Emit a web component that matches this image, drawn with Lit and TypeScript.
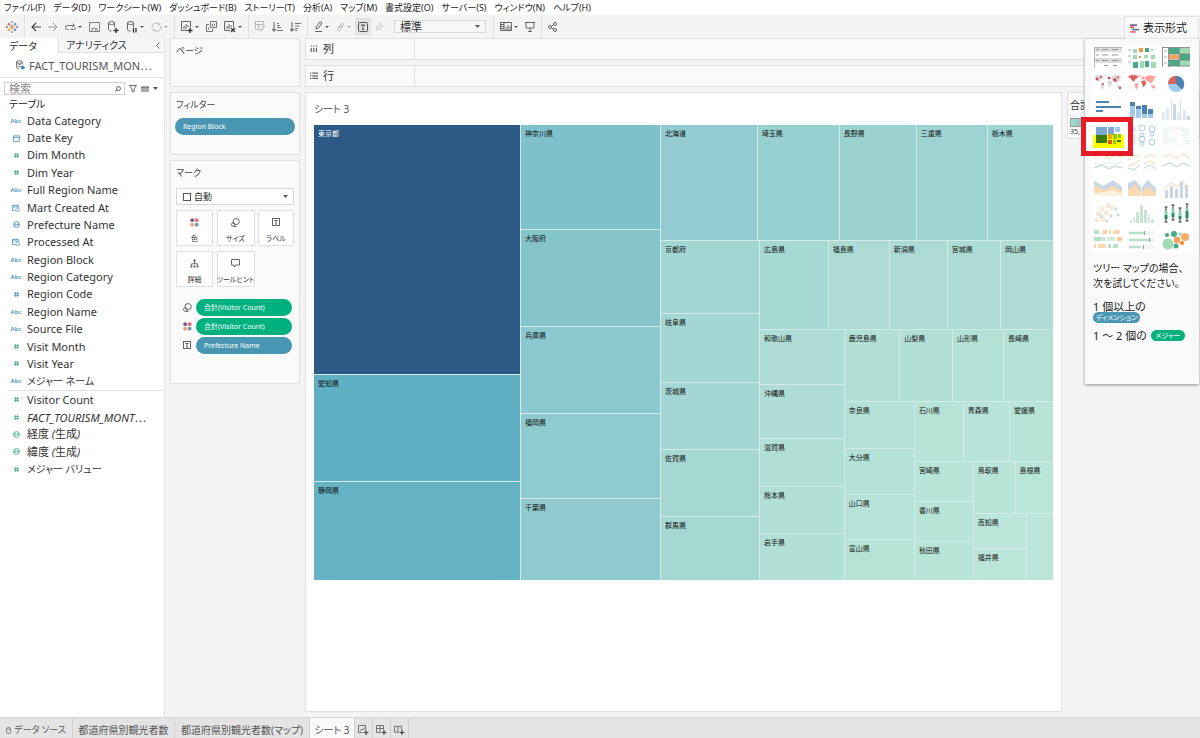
import { LitElement, html, svg, css, TemplateResult } from "lit";
import { customElement, property } from "lit/decorators.js";
import { classMap } from "lit/directives/class-map.js";

/* ---------- icons ---------- */

const G = "#666";
const icon = (w: number, h: number, body: unknown, stroke = G) => html`<svg
  class="icon" width=${w} height=${h} viewBox="0 0 ${w} ${h}" fill="none"
  stroke=${stroke} stroke-width="1" aria-hidden="true">${body}</svg>`;

const plus = svg`<path d="M6.5 9.5h5M9 7v5" stroke="#333" stroke-width="1.4"/>`;
const caret = () => html`<svg class="caret" width="5" height="3" viewBox="0 0 5 3" aria-hidden="true"><path d="M0 0h5L2.5 3z" fill="#555" /></svg>`;
const smallCaret = (c: string) => html`<svg class="caret" width="4" height="2" viewBox="0 0 4 2" aria-hidden="true"><path d="M0 0h4L2 2z" fill=${c} /></svg>`;

const icons: Record<string, TemplateResult> = {
  logo: icon(12, 12, svg`
    <path d="M6 3.8v4.4M3.8 6h4.4" stroke="#e8762d" stroke-width="1.2"/>
    <path d="M3 1.8v2.8M1.6 3.2h2.8" stroke="#c9485b"/><path d="M9 1.8v2.8M7.6 3.2h2.8" stroke="#5b879b"/>
    <path d="M3 7.4v2.8M1.6 8.8h2.8" stroke="#eb912c"/><path d="M9 7.4v2.8M7.6 8.8h2.8" stroke="#59879b"/>
    <path d="M6 0v2M5 1h2M6 10v2M5 11h2" stroke="#7099a6" stroke-width=".8"/>
    <path d="M1 5v2M0 6h2M11 5v2M10 6h2" stroke="#5c6692" stroke-width=".8"/>`),
  back: icon(10, 10, svg`<path d="M10 5H1M5 1L1 5l4 4" stroke-width="1.1"/>`, "#444"),
  forward: icon(10, 10, svg`<path d="M0 5h9M5 1l4 4-4 4"/>`, "#999"),
  replay: icon(11, 8, svg`<path d="M3.500 6.500H2.500a2 2 0 010-4H9.500M7.500 .5l2 2-2 2M5.500 6.500h3a2 2 0 002-2"/>`, "#777"),
  save: icon(11, 10, svg`<path d="M.5.500h10v9H.500zM3 9.500v-3h5v3M6.500 7.500v1.500" stroke-width=".8"/>`),
  dbAdd: icon(12, 12, svg`<ellipse cx="4.500" cy="2" rx="3" ry="1.500"/><path d="M1.500 2v6.500c0 1 1.500 1.500 3 1.500M7.500 2v4"/>${plus}`),
  dbPause: icon(12, 12, svg`<ellipse cx="4.500" cy="2" rx="3" ry="1.500"/><path d="M1.500 2v6.500c0 1 1 1.500 3 1.500M7.500 2v4"/><path d="M7.500 7v4.500M10 7v4.500" stroke="#333" stroke-width="1.300"/>`),
  refresh: icon(11, 10, svg`<path d="M1 6a4.300 4.300 0 017.500-3.500M10 4a4.300 4.300 0 01-7.500 3.700M8.800.8v2H6.800M2 9.300v-2h2"/>`, "#bbb"),
  sheetAdd: icon(12, 12, svg`<path d="M.500.500h9v6M.500.500v9h6M3 8V5M5 8V3M7 6V4"/>${plus}`),
  duplicate: icon(11, 11, svg`<path d="M4.500.500h6v6h-6zM3 3.500H.500v7h6V8M6.500 5V3M8.500 5V2.500M2.500 8.500v-2"/>`, "#777"),
  sheetClear: icon(12, 12, svg`<path d="M.500.500h9v6M.500.500v9h6M3 8V5M5 8V3M7 6V4"/><path d="M7 7l4 4M11 7l-4 4" stroke="#333" stroke-width="1.200"/>`),
  swap: icon(10, 11, svg`<path d="M.500.500h8v3h-8zM.500.500v8h3v-5M5 9c3 0 4-1 4-4M7.500 6L9 4.500 10 6M6 7.500L4.500 9 6 10.500" stroke-width=".8"/>`, "#aaa"),
  asc: icon(11, 10, svg`<path d="M2 0v9M.200 7L2 9l1.800-2M5 1.500h2M5 3.500h3M5 5.500h4M5 8.500h6" stroke-width="1.200"/>`, "#777"),
  desc: icon(11, 10, svg`<path d="M2 0v9M.200 7L2 9l1.800-2M5 1.500h6M5 4h4.500M5 6.500h3M5 8.500h2" stroke-width="1.200"/>`, "#777"),
  pen: icon(9, 11, svg`<path d="M2 8l.5-2.500L6 .800 8 2 4.500 7zM1 10.500h7"/>`),
  clip: icon(9, 10, svg`<path d="M2 6l3.500-4.500c1-1 3 0 2 1.500L4 8c-1 1.300-3.500.200-2-1.800l3-3.500M4 6.500l2-3"/>`, "#bbb"),
  label: icon(10, 10, svg`<rect x=".500" y=".500" width="9" height="9" rx="1"/><path d="M3 3.500V3h4v.500M5 3v4.500M4 7.500h2"/>`, "#555"),
  pin: icon(9, 9, svg`<path d="M5 .700l3 3-1.500.300L5 6l-.300 1.700L1.500 4.500 3.500 4 5 2.200zM3 6L.500 8.500" stroke-width=".8"/>`, "#bbb"),
  cards: icon(12, 10, svg`<path d="M.500.500h11v8H.500zM4 .500v8" /><path d="M1 2.500h3M1 4.500h3M1 6.500h3M6 8V5M8 8V3M10 8V4"/>`),
  present: icon(10, 10, svg`<path d="M0 .500h10M1 .500v5.500h8V.500M5 6v3M3 9.500h4"/>`),
  share: icon(9, 10, svg`<circle cx="2" cy="5" r="1.500"/><circle cx="7" cy="2" r="1.500"/><circle cx="7" cy="8" r="1.500"/><path d="M3.300 4.300l2.400-1.500M3.300 5.700l2.400 1.500"/>`),
  chevron: icon(4, 7, svg`<path d="M3.500.500l-3 3 3 3"/>`),
  source: icon(9, 10, svg`<ellipse cx="3.500" cy="2" rx="2.800" ry="1.300"/><path d="M.700 2v5.500c0 .800 1 1.300 2.500 1.300M6.300 2v2.500M2.500 4.500h2M2.500 6.500h2"/><circle cx="6.700" cy="7.500" r="2" fill="#4a8fb5" stroke="none"/>`),
  search: icon(6, 6, svg`<circle cx="3.500" cy="2.500" r="2"/><path d="M2 4L.300 5.700"/>`),
  funnel: icon(8, 8, svg`<path d="M.500.500h7L5 4v3L3 6V4z"/>`),
  list: icon(8, 6, svg`<path d="M1 0v6M3 0v6M5 0v6M7 0v6" stroke-width="1.100"/><path d="M0 1.500h8" stroke-width=".6"/>`),
  columns: icon(8, 8, svg`<path d="M1.200 3v4M3.800 3v4M6.400 3v4M1.200.500v1.200M3.800.500v1.200M6.400.500v1.200" stroke-width="1.200"/>`),
  rows: icon(8, 8, svg`<path d="M0 1.200h1.300M0 3.800h1.300M0 6.400h1.300M2.200 1.200H8M2.200 3.800H8M2.200 6.400H8" stroke-width="1.200"/>`),
  color: icon(9, 9, svg`<g stroke="none"><circle cx="2.200" cy="2.200" r="1.900" fill="#7b5a87"/><circle cx="6.700" cy="2.200" r="1.900" fill="#ee6677"/><circle cx="2.200" cy="6.700" r="1.900" fill="#f0a070"/><circle cx="6.700" cy="6.700" r="1.900" fill="#6b98a8"/></g>`),
  size: icon(9, 9, svg`<circle cx="5.200" cy="3.600" r="3.100"/><circle cx="2.300" cy="6.500" r="1.800"/><path d="M3 8.500h2.500"/>`),
  tag: icon(8, 9, svg`<rect x=".500" y=".500" width="7" height="7"/><path d="M2.300 2.500h3.400M4 2.500v3.500M3 6h2"/>`, "#666"),
  detail: icon(9, 9, svg`<path d="M4.500 2v3M1.500 6.500V4.800h6v1.700"/><g fill="#555" stroke="none"><rect x="3.500" y=".5" width="2" height="2"/><rect x=".500" y="6.500" width="1.800" height="2"/><rect x="3.600" y="6.500" width="1.800" height="2"/><rect x="6.700" y="6.500" width="1.800" height="2"/></g>`),
  tooltip: icon(9, 9, svg`<path d="M.500.500h8v5.500H5L3 8V6H.500z"/>`),
  square: icon(8, 8, svg`<rect x=".500" y=".500" width="7" height="7"/>`, "#555"),
  cylinder: icon(5, 7, svg`<rect x=".500" y=".500" width="4" height="6" rx="1.500"/><path d="M.500 2.200h4"/>`, "#888"),
  newSheet: icon(11, 10, svg`<path d="M.500.500h7v4M.500.500v7h4M2 6l2-2 1 1 2-2.500" stroke-width=".9"/><path d="M5.500 7.500h5M8 5v5" stroke="#444" stroke-width="1.200"/>`),
  newDash: icon(11, 10, svg`<path d="M.500.500h7v4M.500.500v7h4M.500 3.500h7M4 .500v7" stroke-width=".9"/><path d="M5.500 7.500h5M8 5v5" stroke="#444" stroke-width="1.200"/>`),
  newStory: icon(11, 10, svg`<path d="M.500 1l3.500.500L7.500 1v4M.500 1v6l3.500.500M4 1.500v6" stroke-width=".9"/><path d="M5.500 7.500h5M8 5v5" stroke="#444" stroke-width="1.200"/>`),
  showMe: icon(10, 9, svg`<path d="M0 1.200h7" stroke="#7b5a87" stroke-width="1.800"/><path d="M0 3.400h4" stroke="#e15759" stroke-width="1.800"/><path d="M2 5.600h7" stroke="#4e79a7" stroke-width="1.600"/><path d="M0 7.900h6" stroke="#f0787a" stroke-width="1.800"/>`),
};

const blue = "#5f9fbe";
const green = "#55b995";
const typeIcon = (kind: string, tone: string) => {
  const c = tone === "dim" ? blue : green;
  switch (kind) {
    case "abc":
      return html`<span class="abc">Abc</span>`;
    case "num":
      return icon(7, 7, svg`<path d="M2.500 1v5M4.500 1v5M1 2.500h5M1 4.500h5" stroke-width=".9"/>`, c);
    case "geo":
      return icon(7, 7, svg`<circle cx="3.500" cy="3.500" r="2.900"/><path d="M.500 3.500h6M2 1.300v4.400M5 1.300v4.400" stroke-width=".7"/>`, c);
    case "date":
      return icon(7, 7, svg`<path d="M.500 1h6v5.500h-6zM.500 2.700h6M2 0v1M5 0v1" stroke-width=".9"/>`, c);
    default:
      return icon(8, 8, svg`<path d="M3.500 6.500h-3v-5h6V3.500M.500 3h6M2 .500v1M5 .500v1" stroke-width=".9"/><circle cx="5.700" cy="5.700" r="1.800" stroke-width=".8"/>`, c);
  }
};

/* ---------- chart thumbnails ---------- */

type Box = [number, number, number, number, string];
const boxes = (list: Box[]) => list.map(([x, y, w, h, c]) => svg`<rect x=${x} y=${y} width=${w} height=${h} fill=${c}/>`);
const line = (d: string, c: string, w = 1) => svg`<path d=${d} fill="none" stroke=${c} stroke-width=${w}/>`;
const rings = (pts: number[][], c: string, r = 2) => pts.map(([x, y, q]) => svg`<circle cx=${x} cy=${y} r=${q ?? r} fill="none" stroke=${c} stroke-width=".9"/>`);
const world = "M0 2l3-2 6 .500 1 2-3 2-1 2-2-1-1-2zM7 8l3 .500v3L8.500 15 7 12zM10 0h3l-1 2zM13 3l3-2 1 2-2 2zM13 6l4-.500 1 3-2.500 4-1.500-4zM17 2l4-2 7 1.500-2 2-1 3-3 2-1-2-3-1zM22.500 11l3-1 2 2-2 2z";

const thumbs: { name: string; art: unknown }[] = [
  { name: "テキスト表", art: svg`${boxes([[0, 0, 28, 5, "#dcdcdc"], [0, 11, 28, 5, "#dcdcdc"]])}
      ${line("M.500 0v21M0 .500h28", "#aaa", .8)}
      ${line("M2 2.500h3M2 8h3M2 13.500h3M8 2.500h6M18 2.500h6M8 8h6M18 8h6M8 13.500h6M18 13.500h6M10 18.500h4M19 18.500h4", "#999", 1)}` },
  { name: "ヒート マップ", art: svg`${boxes([[5, 2, 4, 4, "#a1dbb5"], [11, 1, 4, 4, "#f59b3c"], [17, 1, 4, 4, "#4aa986"], [23, 2, 2, 2, "#a1dbb5"], [5, 8, 4, 4, "#a1dbb5"], [11, 9, 2, 2, "#f59b3c"], [16, 8, 4, 3, "#a1dbb5"], [23, 8, 4, 4, "#a1dbb5"], [5, 15, 5, 6, "#4aa986"], [12, 14, 4, 7, "#a1dbb5"], [17, 14, 4, 6, "#4aa986"], [23, 15, 5, 6, "#a1dbb5"]])}${line("M0 3h3M0 9h3M0 15h3", "#aaa")}` },
  { name: "ハイライト表", art: svg`${boxes([[7, 1, 10, 6, "#4aa986"], [18, 1, 10, 6, "#a1dbb5"], [7, 8, 10, 4, "#f5a35c"], [18, 7, 10, 6, "#4aa986"], [7, 13, 10, 6, "#4aa986"], [18, 13, 10, 6, "#a1dbb5"]])}${line("M.500 0v20M0 .500h28M6.500 0v20M17.500 0v20M6 7h22M6 13h22M6 19h22", "#777", .8)}${line("M2 4h3M2 10h3M2 16h3", "#aaa")}` },
  { name: "シンボル マップ", art: svg`<path d=${world} fill="#d8d8d8" transform="translate(0 2)"/><g fill="#d14b58"><circle cx="3" cy="6" r="1.500"/><circle cx="7" cy="4" r="1"/><circle cx="15" cy="5" r="1.300"/><circle cx="21" cy="7" r="1.800"/><circle cx="24" cy="4" r="1"/><circle cx="26" cy="15" r="1.200"/><circle cx="9" cy="11" r="1"/></g>` },
  { name: "マップ", art: svg`<g transform="translate(0 2)"><path d=${world} fill="#ffa09a"/><path d="M0 2l3-2 6 .500 1 2-3 2-1 2-2-1-1-2z" fill="#dc605c"/><path d="M13 6l4-.500 1 3-2.500 4-1.500-4z" fill="#dc605c"/></g>` },
  { name: "円グラフ", art: svg`<circle cx="14" cy="11" r="8" fill="#a3cbee"/><path d="M14 11V3a8 8 0 016 13.500z" fill="#4e82ae"/><path d="M14 11V3a8 8 0 00-8 8z" fill="#dc605c"/>` },
  { name: "横棒グラフ", art: svg`${boxes([[2, 2, 13, 2, "#4e82ae"], [2, 7, 25, 2, "#4e82ae"], [2, 11, 7, 2, "#4e82ae"]])}` },
  { name: "積み上げ棒グラフ", art: svg`${boxes([[2, 3, 5, 16, "#a3cbee"], [2, 3, 5, 4, "#4e82ae"], [8, 7, 5, 12, "#a3cbee"], [8, 7, 5, 3, "#4e82ae"], [14, 6, 5, 13, "#4e82ae"], [14, 15, 5, 4, "#a3cbee"], [20, 10, 5, 9, "#a3cbee"], [20, 10, 5, 5, "#4e82ae"]])}` },
  { name: "並列棒グラフ", art: svg`${line("M9.500 0v21M18.500 0v21", "#e0e0e0")}${boxes([[0, 13, 3, 8, "#dbeaf6"], [4, 9, 3, 12, "#dbeaf6"], [11, 5, 3, 16, "#c7d6e3"], [15, 14, 3, 7, "#dbeaf6"], [21, 11, 3, 10, "#dbeaf6"], [25, 17, 3, 4, "#c7d6e3"]])}` },
  { name: "ツリーマップ", art: svg`${boxes([[-1, 10, 31, 13, "#ffff00"], [2, 2, 11, 8, "#7ba7d0"], [14, 2, 6, 8, "#7ba7d0"], [21, 2, 5, 5, "#a3cbee"], [2, 10, 11, 8, "#3f7a00"], [14, 9, 4, 5, "#f5a700"], [14, 15, 4, 4, "#e15a00"], [19, 9, 4, 5, "#97c800"], [24, 9, 3, 4, "#97c800"], [19, 15, 3, 4, "#97c800"], [23, 15, 4, 2, "#3f7a00"]])}` },
  { name: "円ビュー", art: svg`${rings([[5, 4], [14, 3, 3], [24, 4, 3], [14, 10], [24, 9], [5, 12], [14, 14, 3], [5, 17, 2], [14, 19], [24, 17, 3]], "#9cc4e4")}` },
  { name: "並列円", art: svg`${rings([[3, 5], [9, 4], [20, 4], [25, 6], [4, 11], [22, 11], [3, 17], [9, 16], [25, 17]], "#dce8f1")}${line("M14 0v21", "#eee")}` },
  { name: "線 (連続)", art: svg`${line("M0 7l8-4 7 5 6-5 7 4", "#fbd3a6")}${line("M0 12l8 2 7-3 6 3 7-4", "#e6e6e6")}${line("M0 17l8-3 7 4 6-3 7 2", "#b7cede")}` },
  { name: "線 (不連続)", art: svg`${line("M0 9l6-5 6 2M16 7l6-4 6 4", "#fbd3a6")}${line("M0 15l6-2 6-4M16 13l6-3 6 3", "#fbd3a6")}${line("M0 17l6 2 6-5M16 17l6-3 6 4", "#b7cede")}` },
  { name: "二重線", art: svg`${line("M0 7l8-4 7 5 6-5 7 4", "#fbd3a6")}${line("M0 15l8-3 7 4 6-4 7 3", "#b7cede")}` },
  { name: "面グラフ (連続)", art: svg`<path d="M0 4l9 5 10-6 9 7v9H0z" fill="#c9d7e4"/><path d="M0 8l10 5 9-4 9 5v5H0z" fill="#fbd9b3"/><path d="M0 16l10-1 9-2 9 4v2H0z" fill="#fef0e0"/>` },
  { name: "面グラフ (不連続)", art: svg`<path d="M0 6l7-3 6 7v9H0zM14 10l6-7 8 8v8H14z" fill="#c9d7e4"/><path d="M0 13l7-6 6 8v4H0zM14 14l6-4 8 6v3H14z" fill="#fbd9b3"/>` },
  { name: "二重組み合わせ", art: svg`${boxes([[3, 13, 3, 8, "#c9d7e4"], [8, 9, 3, 12, "#c9d7e4"], [13, 12, 3, 9, "#c9d7e4"], [18, 5, 3, 16, "#c9d7e4"], [23, 8, 3, 13, "#c9d7e4"]])}${line("M2 12l7-6 6 4 5-6 6 6", "#fbd3a6")}` },
  { name: "散布図", art: svg`${rings([[8, 6], [14, 3], [4, 11], [12, 10], [18, 5], [3, 17], [9, 16]], "#fcd0a5", 1.6)}${line("M22 4v4M20 6h4M24 10v4M22 12h4M17 11v4M15 13h4M13 16v4M11 18h4M7 11v4M5 13h4", "#b5dfca")}` },
  { name: "ヒストグラム", art: svg`${boxes([[2, 17, 2, 3, "#d5eadc"], [5, 14, 2, 6, "#d5eadc"], [8, 9, 3, 11, "#c9e3d3"], [12, 2, 3, 18, "#c9e3d3"], [16, 7, 3, 13, "#c9e3d3"], [20, 11, 2, 9, "#d5eadc"], [23, 16, 3, 4, "#d5eadc"]])}` },
  { name: "箱ヒゲ図", art: svg`${line("M4 4v15M11 2v15M18 5v14M25 1v17M2.500 4h3M2.500 19h3M9.500 2h3M9.500 17h3M16.500 5h3M16.500 19h3M23.500 1h3M23.500 18h3", "#333")}${boxes([[2.500, 8, 3, 4, "#8fd3b0"], [2.500, 12, 3, 4, "#2d8f68"], [9.500, 6, 3, 4, "#8fd3b0"], [9.500, 10, 3, 4, "#2d8f68"], [16.500, 8, 3, 5, "#8fd3b0"], [16.500, 13, 3, 3, "#2d8f68"], [23.500, 5, 3, 3, "#8fd3b0"], [23.500, 8, 3, 7, "#2d8f68"]])}` },
  { name: "ガント ビュー", art: svg`${boxes([[0, 1, 5, 4, "#b9e0cb"], [9, 1, 4, 4, "#fbd3a6"], [15, 1, 2, 4, "#fbd3a6"], [19, 1, 7, 4, "#fbd9b3"], [0, 8, 8, 4, "#b9e0cb"], [9, 8, 2, 4, "#b9e0cb"], [13, 8, 8, 4, "#d5eadc"], [23, 8, 5, 4, "#fbc79a"], [0, 15, 2, 4, "#fbd3a6"], [4, 15, 8, 4, "#fbd9b3"], [14, 15, 3, 4, "#b9e0cb"], [19, 15, 5, 4, "#b9e0cb"]])}` },
  { name: "ブレット グラフ", art: svg`${boxes([[1, 2, 26, 4, "#f3f3f3"], [1, 9, 26, 4, "#f3f3f3"], [1, 16, 26, 4, "#f3f3f3"], [1, 3, 16, 2, "#b9e0cb"], [1, 10, 22, 2, "#b9e0cb"], [1, 17, 12, 2, "#b9e0cb"], [16, 2, 1, 4, "#999"], [21, 9, 1, 4, "#999"], [15, 16, 1, 4, "#999"]])}` },
  { name: "バブル チャート", art: svg`<circle cx="6" cy="15" r="5.500" fill="#a1dbb5"/><circle cx="12" cy="5" r="3" fill="#4aa986"/><circle cx="15" cy="11" r="3.300" fill="#f5a35c"/><circle cx="23" cy="8" r="4" fill="#f9ae66"/><circle cx="5" cy="6" r="2.100" fill="#4aa986"/><circle cx="14" cy="17" r="2.500" fill="#4aa986"/><circle cx="20" cy="14" r="2.100" fill="#f58b28"/><circle cx="18" cy="5" r="1.800" fill="#a1dbb5"/>` },
];

/* ---------- treemap ---------- */

interface Node {
  size: number;
  name?: string;
  color?: string;
  dir?: "row" | "column";
  items?: Node[];
}
const leaf = (name: string, size: number, color: string): Node => ({ name, size, color });
const row = (size: number, ...items: Node[]): Node => ({ size, dir: "row", items });
const col = (size: number, ...items: Node[]): Node => ({ size, dir: "column", items });

/* The map is nested from the smallest corner outwards. */
const corner = col(162,
  row(105, leaf("鳥取県", 84, "#b9e4d8"), leaf("島根県", 77, "#bae5d9")),
  row(135, col(108, leaf("高知県", 70, "#bbe5d9"), leaf("福井県", 65, "#bbe5d9")), leaf("", 53, "#bbe5d9")),
);
const south = col(280,
  row(119, leaf("石川県", 98, "#b7e3d7"), leaf("青森県", 93, "#b8e3d8"), leaf("愛媛県", 88, "#b8e4d8")),
  row(240, col(118, leaf("宮崎県", 81, "#b8e4d8"), leaf("香川県", 80, "#b9e4d8"), leaf("秋田県", 79, "#b9e4d8")), corner),
);
const lowerRight = col(420,
  row(143, leaf("鹿児島県", 111, "#b3e0d6"), leaf("山梨県", 106, "#b3e0d6"), leaf("山形県", 102, "#b4e1d6"), leaf("長崎県", 100, "#b4e1d6")),
  row(359, col(140, leaf("奈良県", 94, "#b4e1d7"), leaf("大分県", 92, "#b5e2d7"), leaf("山口県", 90, "#b6e2d7"), leaf("富山県", 83, "#b7e3d7")), south),
);
const middle = col(589,
  row(178, leaf("広島県", 138, "#a6d9d4"), leaf("福島県", 122, "#acdad4"), leaf("新潟県", 116, "#acdad5"), leaf("宮城県", 106, "#acdcd5"), leaf("岡山県", 106, "#aedcd5")),
  row(502, col(169, leaf("和歌山県", 110, "#aeddd5"), leaf("沖縄県", 107, "#afddd5"), leaf("滋賀県", 96, "#b1dfd6"), leaf("熊本県", 96, "#b2dfd6"), leaf("岩手県", 93, "#b2e0d6")), lowerRight),
);
const visitors = row(1,
  col(413, leaf("東京都", 501, "#2c5985"), leaf("愛知県", 212, "#5fafc2"), leaf("静岡県", 197, "#65b2c3")),
  col(279, leaf("神奈川県", 210, "#7fc1cb"), leaf("大阪府", 194, "#84c5cc"), leaf("兵庫県", 174, "#8bc8cf"), leaf("福岡県", 169, "#8ecbce"), leaf("千葉県", 163, "#8fcbce")),
  col(786,
    row(230, leaf("北海道", 194, "#92ccd0"), leaf("埼玉県", 164, "#97d0d0"), leaf("長野県", 154, "#9ad1d1"), leaf("三重県", 142, "#9dd3d2"), leaf("栃木県", 132, "#9ed4d3")),
    row(680, col(197, leaf("京都府", 147, "#a2d6d3"), leaf("岐阜県", 137, "#a4d7d3"), leaf("茨城県", 135, "#a4d7d3"), leaf("佐賀県", 133, "#a5d8d3"), leaf("群馬県", 128, "#a6d8d3")), middle)),
);

@customElement("tree-map")
class TreeMap extends LitElement {
  static styles = css`
    :host { display: flex; background: #d5ebe9; }
    .group { display: flex; gap: 1px; flex-basis: 0; min-width: 0; min-height: 0; }
    .column { flex-direction: column; }
    .cell { flex-basis: 0; min-width: 0; min-height: 0; overflow: hidden; font-size: 7px; line-height: 11px; color: #111; white-space: nowrap; }
    .cell.dark { color: #fff; }
    .name { display: block; padding: 3px 4px; }
  `;
  @property({ attribute: false }) data!: Node;

  private draw(n: Node): TemplateResult {
    return n.items
      ? html`<div class=${classMap({ group: true, column: n.dir === "column" })} style="flex-grow:${n.size}">${n.items.map((c) => this.draw(c))}</div>`
      : html`<div class=${classMap({ cell: true, dark: n.color === "#2c5985" })} style="flex-grow:${n.size};background:${n.color}"><span class="name">${n.name}</span></div>`;
  }
  render() {
    return this.draw(this.data);
  }
}

/* ---------- data ---------- */

const menus = ["ファイル(F)", "データ(D)", "ワークシート(W)", "ダッシュボード(B)", "ストーリー(T)", "分析(A)", "マップ(M)", "書式設定(O)", "サーバー(S)", "ウィンドウ(N)", "ヘルプ(H)"];
const dots = html`<span class="dots">…</span>`;

const dimensions: [string, string, string][] = [
  ["abc", "Data Category", "dim"], ["date", "Date Key", "dim"], ["num", "Dim Month", "mea"], ["num", "Dim Year", "mea"],
  ["abc", "Full Region Name", "dim"], ["datetime", "Mart Created At", "dim"], ["geo", "Prefecture Name", "dim"],
  ["datetime", "Processed At", "dim"], ["abc", "Region Block", "dim"], ["abc", "Region Category", "dim"],
  ["num", "Region Code", "dim"], ["abc", "Region Name", "dim"], ["abc", "Source File", "dim"],
  ["num", "Visit Month", "mea"], ["num", "Visit Year", "mea"], ["abc", "メジャー ネーム", "dim"],
];
const measures: [string, unknown, boolean][] = [
  ["num", "Visitor Count", false], ["num", html`FACT_TOURISM_MONT${dots}`, true], ["geo", "経度 (生成)", true],
  ["geo", "緯度 (生成)", true], ["num", "メジャー バリュー", false],
];
const isKana = (n: unknown) => typeof n === "string" && n.startsWith("メジャー");
const markButtons: [string, string][] = [["color", "色"], ["size", "サイズ"], ["tag", "ラベル"], ["detail", "詳細"], ["tooltip", "ツールヒント"]];

const tool = (name: string, label: string, drop = "", on = false) =>
  html`<button class=${classMap({ tool: true, on })} aria-label=${label}>${icons[name]}${drop ? smallCaret(drop) : ""}</button>`;

@customElement("app-root")
class AppRoot extends LitElement {
  static styles = css`
    :host {
      display: grid; grid-template-rows: 15px 23px minmax(0, 1fr) 21px; height: 100vh; overflow: hidden; position: relative;
      font-family: "Noto Sans", "Noto Sans CJK JP", sans-serif; font-size: 11px; line-height: 16px; color: #333;
      font-feature-settings: "palt"; background: #f4f4f4;
    }
    * { box-sizing: border-box; }
    button, select, input { font: inherit; font-feature-settings: inherit; color: inherit; margin: 0; padding: 0; border: 0; background: none; border-radius: 0; appearance: none; }
    h2, ul, p { margin: 0; padding: 0; font-weight: 400; font-size: inherit; list-style: none; }
    .icon, .caret { display: block; flex: none; }
    .dots { font-family: "Noto Sans CJK JP", sans-serif; }

    .menus { display: flex; gap: 8px; padding: 0 4px; background: #fff; font-size: 9px; line-height: 15px; white-space: nowrap; color: #222; }

    .toolbar { display: flex; align-items: center; }
    .tools { display: flex; align-items: center; gap: 1px; height: 100%; padding: 0 3px; border-right: 1px solid #e0e0e0; }
    .tools:last-child { border: 0; }
    .tool { display: flex; align-items: center; gap: 2px; height: 17px; padding: 0 3px; }
    .tool.on { background: #e2e2e2; }
    .pick { position: relative; display: flex; align-items: center; }
    .pick select { width: 100%; border: 1px solid #d9d9d9; }
    .pick .caret { position: absolute; right: 6px; }
    .fit { width: 92px; margin: 0 4px 0 6px; }
    .fit select { height: 13px; line-height: 11px; padding-left: 5px; background: #f7f7f7; }

    .work { display: grid; grid-template-columns: 165px 130px minmax(0, 1fr); column-gap: 5px; min-height: 0; }
    .data { background: #fff; border-right: 1px solid #e3e3e3; min-width: 0; }
    .tabs { display: flex; height: 15px; font-size: 10px; }
    .tabs button { width: 58px; text-align: left; padding-left: 9px; line-height: 14px; white-space: nowrap; }
    .tabs .other { flex: 1; background: #f6f6f6; border: solid #e0e0e0; border-width: 0 0 1px 1px; padding-left: 7px; display: flex; justify-content: space-between; align-items: center; padding-right: 4px; }
    .source { display: flex; align-items: center; gap: 4px; height: 25px; padding-left: 16px; border-bottom: 1px solid #e6e6e6; color: #555; white-space: nowrap; }
    .find { display: flex; align-items: center; gap: 4px; padding: 4px 4px 0; }
    .find label { display: flex; align-items: center; flex: none; width: 121px; height: 13px; border: 1px solid #d0d0d0; padding: 0 3px 0 4px; }
    .find input { flex: 1; min-width: 0; height: 11px; line-height: 11px; outline: 0; }
    .find input::placeholder { color: #888; opacity: 1; }
    .heading { padding-left: 9px; height: 17px; line-height: 18px; color: #222; font-size: 10px; }
    .fields { display: grid; grid-auto-rows: 1fr; height: 278px; }
    .fields.short { height: 88px; margin-left: 8px; border-top: 1px solid #e3e3e3; }
    .field { display: flex; align-items: center; white-space: nowrap; }
    .field.kana { font-size: 10px; }
    .kind { display: flex; justify-content: center; width: 16px; margin: 0 3px 0 8px; }
    .short .kind { margin-left: 0; }
    .abc { font-size: 6px; line-height: 8px; font-weight: 600; color: #4a8fb5; }
    .italic { font-style: italic; font-synthesis: none; }

    .cards { display: flex; flex-direction: column; gap: 5px; font-size: 9px; }
    .card { border: 1px solid #e1e1e1; background: #fafafa; padding: 4px; }
    .card h2 { padding-left: 1px; color: #444; }
    .pages { height: 49px; }
    .filters { height: 63px; }
    .marks { height: 224px; }
    .pill { display: flex; align-items: center; height: 17px; width: 100%; border-radius: 9px; padding-left: 8px; background: #4996b2; color: #fff; font-size: 7px; white-space: nowrap; }
    .pill.measure { background: #00b180; }
    .filters .pill { margin-top: 5px; }
    .marktype { margin: 7px 1px 0; }
    .marktype select { height: 17px; padding-left: 17px; background: #fff; }
    .marktype .icon { position: absolute; left: 7px; }
    .grid { display: grid; grid-template-columns: 37px 38px 36px; justify-content: space-between; gap: 5px 0; margin: 5px 1px 0; }
    .grid button { display: flex; flex-direction: column; align-items: center; justify-content: space-between; height: 36px; padding: 7px 0 0; border: 1px solid #e1e1e1; background: #fff; font-size: 7px; line-height: 12px; white-space: nowrap; }
    .encodings { display: grid; gap: 2px; margin: 12px 3px 0 8px; }
    .encodings li { display: grid; grid-template-columns: 13px 1fr; align-items: center; }

    .view { display: flex; flex-direction: column; gap: 5px; min-width: 0; }
    .shelf { display: grid; grid-template-columns: 109px 1fr; height: 22px; flex: none; border: 1px solid #e1e1e1; border-right: 0; background: #fafafa; line-height: 20px; }
    .shelf span { display: flex; align-items: center; gap: 5px; padding-left: 4px; border-right: 1px solid #e1e1e1; }
    .lower { flex: 1; display: grid; grid-template-columns: minmax(0, 1fr) 133px; gap: 5px; min-height: 0; padding-bottom: 5px; }
    .sheet { background: #fff; border: 1px solid #e1e1e1; padding: 7px 8px 0 8px; }
    .sheet h2 { color: #555; height: 25px; line-height: 18px; font-size: 10px; }
    .sheet tree-map { aspect-ratio: 739 / 455; }
    .legend { height: 47px; border: 1px solid #e1e1e1; background: #fafafa; padding: 4px 2px; font-size: 10px; }
    .ramp { width: 60px; height: 9px; margin-top: 5px; border: 1px solid #999; background: linear-gradient(90deg, #a6ddd0, #2c5985); }
    .legend .low { font-size: 7px; line-height: 10px; }

    .showme { position: absolute; top: 16px; right: 1px; width: 114px; display: flex; flex-direction: column; }
    .showme-tab { align-self: flex-end; display: flex; align-items: center; gap: 3px; width: 75px; height: 23px; padding-left: 5px; border: 1px solid #e3e3e3; border-bottom: 0; background: #fafafa; white-space: nowrap; color: #222; }
    .panel { height: 345px; background: #fafafa; padding: 6px 6px 0; box-shadow: 0 1px 3px #0006; color: #222; }
    .thumbs { display: grid; grid-template-columns: repeat(3, 1fr); grid-auto-rows: 26px; background: #fff; }
    .thumbs button { position: relative; display: flex; justify-content: center; align-items: center; }
    .thumbs svg { display: block; overflow: visible; }
    .mark { position: absolute; inset: -6px -8px -7px -10px; z-index: 1; border: 5px solid #e81c24; }
    .hint { padding: 8px 2px 0; line-height: 15px; white-space: nowrap; }
    .hint p { font-size: 10px; }
    .hint .need { margin-top: 8px; }
    .need .pill { width: 47px; height: 11px; line-height: 11px; justify-content: center; padding: 0; margin-top: -2px; }
    .hint .need.line { display: flex; align-items: center; gap: 4px; margin-top: 5px; }
    .need.line .pill { width: 34px; margin: 0; }

    .sheets { display: flex; background: #e4e4e4; border-top: 1px solid #d6d6d6; font-size: 10px; color: #555; }
    .sheets button { display: flex; align-items: center; justify-content: center; gap: 3px; border-right: 1px solid #cfcfcf; white-space: nowrap; padding: 4px 0 0; }
    .sheets .active { background: #fafafa; }
    .w1 { width: 73px; font-size: 9px; } .w2 { width: 102px; } .w3 { width: 135px; } .w4 { width: 45px; } .w5 { width: 18px; }
  `;

  render() {
    return html`
      <nav class="menus">${menus.map((m) => html`<button>${m}</button>`)}</nav>

      <div class="toolbar">
        <div class="tools">${tool("logo", "開始ページ")}</div>
        <div class="tools">${tool("back", "元に戻す")}${tool("forward", "やり直し")}${tool("replay", "再生", "#555")}${tool("save", "保存")}${tool("dbAdd", "新しいデータ ソース")}${tool("dbPause", "自動更新の一時停止", "#555")}${tool("refresh", "更新", "#aaa")}</div>
        <div class="tools">${tool("sheetAdd", "新しいワークシート", "#555")}${tool("duplicate", "複製")}${tool("sheetClear", "シートのクリア", "#555")}</div>
        <div class="tools">${tool("swap", "行と列の交換")}${tool("asc", "昇順")}${tool("desc", "降順")}</div>
        <div class="tools">${tool("pen", "ハイライト", "#555")}${tool("clip", "グループ", "#aaa")}${tool("label", "マーク ラベル", "", true)}${tool("pin", "軸の固定")}
          <div class="pick fit"><select aria-label="適合"><option>標準</option></select>${caret()}</div></div>
        <div class="tools">${tool("cards", "カードの表示", "#555")}${tool("present", "プレゼンテーション")}</div>
        <div class="tools">${tool("share", "共有")}</div>
      </div>

      <main class="work">
        <aside class="data">
          <div class="tabs"><button>データ</button><button class="other">アナリティクス${icons.chevron}</button></div>
          <div class="source">${icons.source}<span>FACT_TOURISM_MON${dots}</span></div>
          <div class="find">
            <label><input type="text" placeholder="検索" aria-label="検索" />${icons.search}</label>
            ${icons.funnel}${icons.list}${caret()}
          </div>
          <h2 class="heading">テーブル</h2>
          <ul class="fields">${dimensions.map(([k, n, t]) => html`<li class=${classMap({ field: true, kana: isKana(n) })}><span class="kind">${typeIcon(k, t)}</span>${n}</li>`)}</ul>
          <ul class="fields short">${measures.map(([k, n, i]) => html`<li class=${classMap({ field: true, kana: isKana(n) })}><span class="kind">${typeIcon(k, "mea")}</span><span class=${classMap({ italic: i })}>${n}</span></li>`)}</ul>
        </aside>

        <section class="cards">
          <div class="card pages"><h2>ページ</h2></div>
          <div class="card filters"><h2>フィルター</h2><button class="pill">Region Block</button></div>
          <div class="card marks">
            <h2>マーク</h2>
            <div class="pick marktype">${icons.square}<select aria-label="マーク タイプ"><option>自動</option></select>${caret()}</div>
            <div class="grid">${markButtons.map(([i, t]) => html`<button>${icons[i]}<span>${t}</span></button>`)}</div>
            <ul class="encodings">
              <li>${icons.size}<button class="pill measure">合計(Visitor Count)</button></li>
              <li>${icons.color}<button class="pill measure">合計(Visitor Count)</button></li>
              <li>${icons.tag}<button class="pill">Prefecture Name</button></li>
            </ul>
          </div>
        </section>

        <section class="view">
          <div class="shelf"><span>${icons.columns}列</span></div>
          <div class="shelf"><span>${icons.rows}行</span></div>
          <div class="lower">
            <article class="sheet"><h2>シート 3</h2><tree-map .data=${visitors}></tree-map></article>
            <div class="legend"><p>合計</p><div class="ramp"></div><p class="low">35,</p></div>
          </div>
        </section>
      </main>

      <aside class="showme">
        <button class="showme-tab">${icons.showMe}表示形式</button>
        <div class="panel">
          <div class="thumbs">${thumbs.map(({ name, art }, i) => html`<button aria-label=${name}>
            <svg width="28" height="22" viewBox="0 0 28 22" aria-hidden="true">${art}</svg>${i === 9 ? html`<span class="mark"></span>` : ""}</button>`)}</div>
          <div class="hint">
            <p>ツリー マップの場合、</p><p>次を試してください。</p>
            <div class="need">1 個以上の<span class="pill">ディメンション</span></div>
            <div class="need line">1 ～ 2 個の<span class="pill measure">メジャー</span></div>
          </div>
        </div>
      </aside>

      <nav class="sheets">
        <button class="w1">${icons.cylinder}データ ソース</button>
        <button class="w2">都道府県別観光者数</button>
        <button class="w3">都道府県別観光者数(マップ)</button>
        <button class="w4 active">シート 3</button>
        <button class="w5" aria-label="新しいワークシート">${icons.newSheet}</button>
        <button class="w5" aria-label="新しいダッシュボード">${icons.newDash}</button>
        <button class="w5" aria-label="新しいストーリー">${icons.newStory}</button>
      </nav>
    `;
  }
}
